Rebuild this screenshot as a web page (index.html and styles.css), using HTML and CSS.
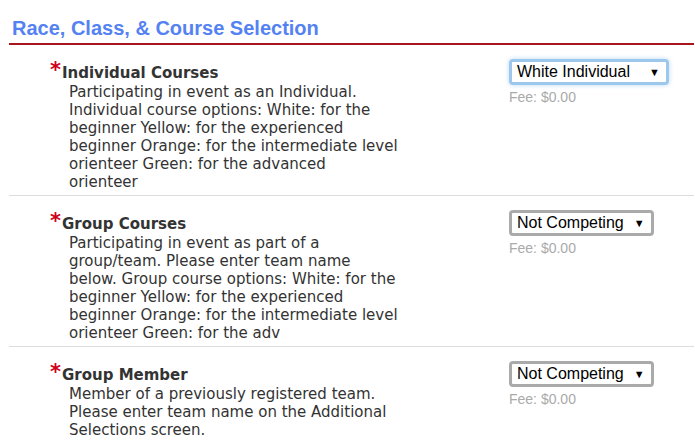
FILE: index.html
```html
<!DOCTYPE html>
<html lang="en">
<head>
  <meta charset="UTF-8" />
  <title>Race, Class, &amp; Course Selection</title>
  <link rel="stylesheet" href="styles.css">
</head>
<body>
  <div class="section">
    <h2 class="section-title">Race, Class, &amp; Course Selection</h2>

    <!-- Individual -->
    <div class="row">
      <div class="field">
        <div class="label"><span class="req">*</span>Individual Courses</div>
        <p class="desc">Participating in event as an Individual. Individual course options: White: for the beginner Yellow: for the experienced beginner Orange: for the intermediate level orienteer Green: for the advanced orienteer</p>
      </div>
      <div class="control">
        <div class="select focused">White Individual <span class="arrow">▼</span></div>
        <div class="fee">Fee: $0.00</div>
      </div>
    </div>

    <!-- Group -->
    <div class="row">
      <div class="field">
        <div class="label"><span class="req">*</span>Group Courses</div>
        <p class="desc">Participating in event as part of a group/team. Please enter team name below. Group course options: White: for the beginner Yellow: for the experienced beginner Orange: for the intermediate level orienteer Green: for the adv</p>
      </div>
      <div class="control">
        <div class="select">Not Competing <span class="arrow">▼</span></div>
        <div class="fee">Fee: $0.00</div>
      </div>
    </div>

    <!-- Member -->
    <div class="row last">
      <div class="field">
        <div class="label"><span class="req">*</span>Group Member</div>
        <p class="desc">Member of a previously registered team. Please enter team name on the Additional Selections screen.</p>
      </div>
      <div class="control">
        <div class="select">Not Competing <span class="arrow">▼</span></div>
        <div class="fee">Fee: $0.00</div>
      </div>
    </div>
  </div>
</body>
</html>
```

FILE: styles.css
```css
* {
  box-sizing: border-box;
}

body {
  margin: 0;
  padding: 0 1px 0 9px;
  background-color: white;
  font-family: 'DejaVu Sans', Verdana, sans-serif;
  color: #333;
}

.section-title {
  margin: 0;
  padding: 17px 0 3px 3px;
  font-family: 'Liberation Sans', Arial, sans-serif;
  font-size: 20px;
  line-height: 23px;
  font-weight: bold;
  color: #5582f2;
  border-bottom: 2px solid #a8151c;
}

.row {
  display: flex;
  justify-content: space-between;
  align-items: flex-start;
  padding: 14px 0 4px 0;
  border-bottom: 1px solid #ddd;
}

.row.last {
  border-bottom: none;
}

.field {
  padding-left: 41px;
  width: 400px;
}

.label {
  margin-top: 5px;
  font-size: 15px;
  font-weight: bold;
  color: #333;
  line-height: 18px;
}

.req {
  color: #d0021b;
  font-size: 21px;
  line-height: 0;
  margin-right: 1px;
  vertical-align: 1px;
}

.desc {
  margin: 1px 0 0 0;
  padding-left: 19px;
  width: 348.5px;
  font-size: 15px;
  line-height: 18px;
  color: #333;
}

.control {
  width: 185px;
}

.select {
  display: inline-block;
  padding: 1px 6px 1px 5px;
  border: 3px solid #aaa;
  border-radius: 4px;
  font-family: 'Liberation Sans', Arial, sans-serif;
  font-size: 16px;
  line-height: 18px;
  color: #000;
  background-color: white;
}

.select.focused {
  border-color: #9cc8ee;
  box-shadow: 0 0 5px #bcdaf5;
  width: 160px;
}

.arrow {
  float: right;
  font-size: 11px;
  margin-left: 10px;
}

.fee {
  margin-top: 4px;
  font-family: 'Liberation Sans', Arial, sans-serif;
  font-size: 14px;
  color: #aaa;
}
```
